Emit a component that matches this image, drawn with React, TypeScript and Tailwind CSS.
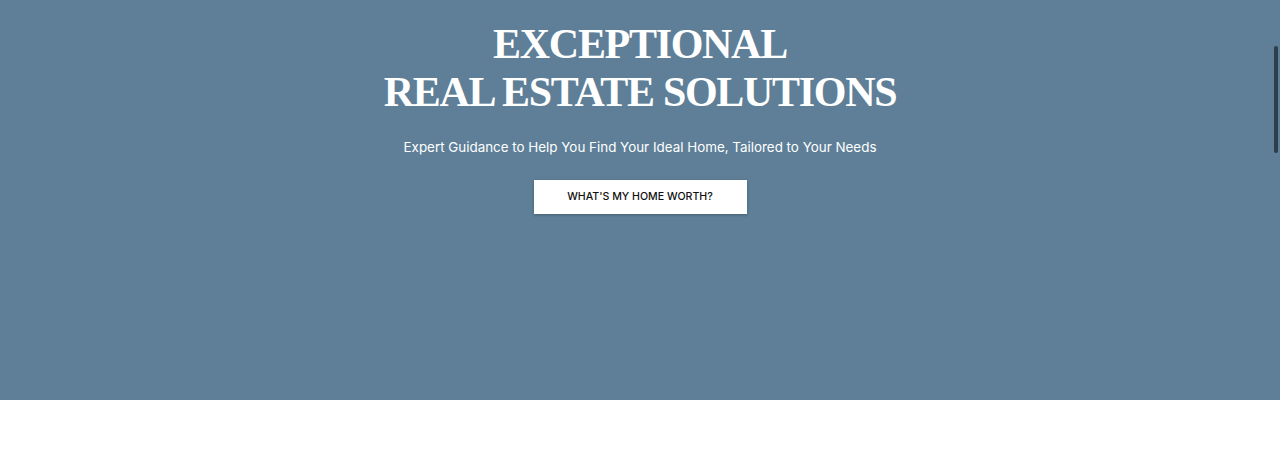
import React from 'react';

const Hero: React.FC = () => {
  return (
    <section className="relative h-[400px] bg-[#5e7f97]">
      <div className="flex flex-col items-center pt-[20px] text-center">
        <h1 className="font-['Liberation_Serif',serif] text-[42px] font-bold leading-[48px] tracking-[-1.3px] text-white">
          EXCEPTIONAL
          <br />
          REAL ESTATE SOLUTIONS
        </h1>
        <p className="mt-[21px] font-['Inter',sans-serif] text-[13.4px] leading-5 text-white">
          Expert Guidance to Help You Find Your Ideal Home, Tailored to Your Needs
        </p>
        <button className="mt-[23px] flex h-[34px] w-[213px] items-center justify-center bg-white font-['Inter',sans-serif] text-[10.6px] font-medium text-[#111] shadow-[0_1px_3px_rgba(0,0,0,0.25)]">
          WHAT'S MY HOME WORTH?
        </button>
      </div>

      {/* scroll position thumb */}
      <div className="absolute right-[2px] top-[46px] h-[107px] w-[4px] rounded-full bg-[#2c3d4b]" />
    </section>
  );
};

export default function App() {
  return (
    <div className="min-h-[466px] bg-white">
      <Hero />
    </div>
  );
}
